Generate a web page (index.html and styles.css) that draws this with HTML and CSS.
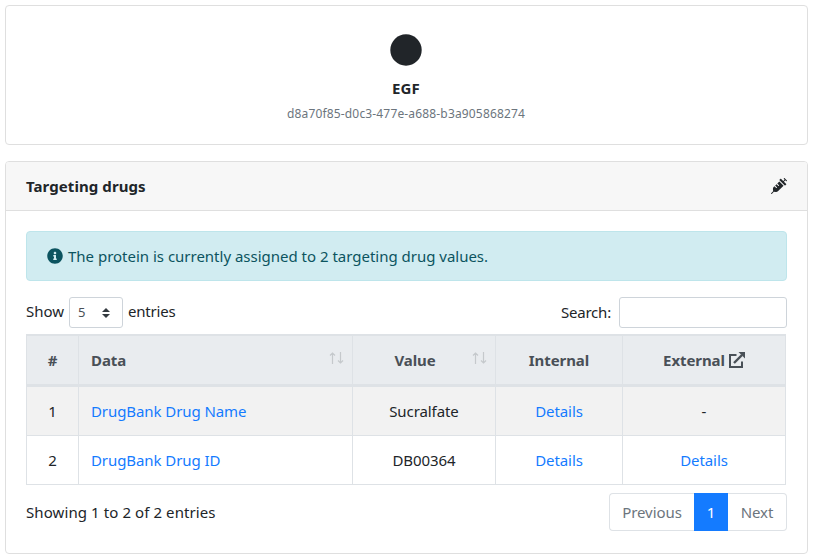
FILE: index.html
```html
<!DOCTYPE html>
<html lang="en">
<head>
<meta charset="utf-8">
<title>EGF</title>
<link rel="stylesheet" href="styles.css">
</head>
<body>
<section class="card summary">
  <svg class="dot" viewBox="0 0 32 32"><circle cx="16" cy="16" r="15.7" fill="currentColor"/></svg>
  <h1 class="name">EGF</h1>
  <small class="uuid">d8a70f85-d0c3-477e-a688-b3a905868274</small>
</section>
<section class="card drugs">
  <header class="card-header">
    <h2 class="title">Targeting drugs</h2>
    <svg class="syringe" viewBox="0 0 512 512"><path fill="currentColor" d="M201.5 174.800l55.700 55.800c3.100 3.100 3.100 8.200 0 11.300l-11.300 11.300c-3.100 3.100-8.200 3.100-11.300 0l-55.700-55.800-45.300 45.300 55.800 55.800c3.100 3.100 3.100 8.200 0 11.300l-11.300 11.300c-3.100 3.100-8.200 3.100-11.300 0L111 265.200l-26.400 26.400c-17.300 17.300-25.600 41.100-23 65.400l7.100 63.600L2.300 487c-3.100 3.100-3.100 8.200 0 11.300l11.300 11.300c3.100 3.100 8.200 3.100 11.300 0l66.300-66.300 63.600 7.100c23.900 2.600 47.900-5.400 65.400-23l181.900-181.900-135.700-135.700-64.900 65zm308.200-93.300L430.500 2.300c-3.100-3.100-8.200-3.100-11.300 0l-11.300 11.300c-3.100 3.100-3.100 8.200 0 11.300l28.300 28.300-45.300 45.300-56.600-56.600-17-17c-3.100-3.100-8.200-3.100-11.300 0l-33.900 33.900c-3.100 3.100-3.100 8.200 0 11.300l17 17L424.800 223l17 17c3.100 3.100 8.200 3.100 11.300 0l33.900-34c3.100-3.100 3.100-8.200 0-11.300l-73.500-73.500 45.300-45.300 28.300 28.300c3.100 3.100 8.200 3.100 11.300 0l11.300-11.300c3.100-3.200 3.100-8.200 0-11.400z"/></svg>
  </header>
  <div class="card-body">
    <div class="alert">
      <svg class="info" viewBox="0 0 512 512"><path fill="currentColor" d="M256 8C119 8 8 119.100 8 256c0 137 111 248 248 248s248-111 248-248C504 119.100 393 8 256 8zm0 110c23.200 0 42 18.800 42 42s-18.800 42-42 42-42-18.800-42-42 18.800-42 42-42zm56 254c0 6.600-5.400 12-12 12h-88c-6.600 0-12-5.400-12-12v-24c0-6.600 5.400-12 12-12h12v-64h-12c-6.600 0-12-5.400-12-12v-24c0-6.600 5.400-12 12-12h64c6.600 0 12 5.400 12 12v100h12c6.600 0 12 5.400 12 12v24z"/></svg>
      <span class="alert-text">The protein is currently assigned to 2 targeting drug values.</span>
    </div>
    <div class="controls">
      <div class="length">
        <span>Show</span>
        <div class="select"><span>5</span><svg class="caret" viewBox="0 0 4 5"><path fill="#343a40" d="M2 0L0 2h4zm0 5L0 3h4z"/></svg></div>
        <span>entries</span>
      </div>
      <label class="search"><span>Search:</span><input type="search"></label>
    </div>
    <table class="table">
      <colgroup><col class="c-num"><col class="c-data"><col class="c-value"><col class="c-int"><col class="c-ext"></colgroup>
      <thead>
        <tr>
          <th>#</th>
          <th class="left"><div class="sortable"><span>Data</span><svg class="sort" viewBox="0 0 15 12"><path d="M3.500 12V1M1 3.500L3.500 1L6 3.500M11.500 0v11M9 8.500L11.500 11L14 8.500"/></svg></div></th>
          <th class="value"><div class="sortable"><span class="grow">Value</span><svg class="sort" viewBox="0 0 15 12"><path d="M3.500 12V1M1 3.500L3.500 1L6 3.500M11.500 0v11M9 8.500L11.500 11L14 8.500"/></svg></div></th>
          <th>Internal</th>
          <th><div class="external"><span>External</span><svg class="ext" viewBox="0 0 16 16"><path fill="none" stroke="currentColor" stroke-width="2" d="M7.500 3H1v12h12V9.500"/><path fill="none" stroke="currentColor" stroke-width="2.400" d="M5 11L13 3"/><path fill="currentColor" d="M9.500 0H16v6.500z"/></svg></div></th>
        </tr>
      </thead>
      <tbody>
        <tr class="odd"><td>1</td><td class="left"><a>DrugBank Drug Name</a></td><td>Sucralfate</td><td><a>Details</a></td><td>-</td></tr>
        <tr><td>2</td><td class="left"><a>DrugBank Drug ID</a></td><td>DB00364</td><td><a>Details</a></td><td><a>Details</a></td></tr>
      </tbody>
    </table>
    <div class="footer">
      <span class="showing">Showing 1 to 2 of 2 entries</span>
      <nav class="pages"><span class="page prev">Previous</span><span class="page active">1</span><span class="page next">Next</span></nav>
    </div>
  </div>
</section>
</body>
</html>
```
FILE: styles.css
```css
* { box-sizing: border-box; }
body {
  margin: 0;
  padding: 5px;
  background: #fff;
  color: #212529;
  font: 15px/24px "Noto Sans", "Open Sans", sans-serif;
  letter-spacing: -0.08px;
}
svg { display: block; flex: none; }
.card { border: 1px solid #dfdfdf; border-radius: 4px; background: #fff; width: 803px; }
.summary {
  height: 140px;
  margin-bottom: 16px;
  padding: 28px 1px 0 0;
  display: flex;
  flex-direction: column;
  align-items: center;
}
.dot { width: 32px; height: 32px; }
.name { margin: 10px 0 0; font-size: 15px; line-height: 24px; font-weight: 700; letter-spacing: 0.1px; }
.uuid { margin-top: 2px; font-size: 12px; color: #6c757d; line-height: 24px; letter-spacing: 0.16px; }
.drugs { height: 393px; }
.card-header {
  height: 49px;
  padding: 0 20px;
  display: flex;
  align-items: center;
  justify-content: space-between;
  background: #f7f7f7;
  border-bottom: 1px solid #dfdfdf;
  border-radius: 3px 3px 0 0;
}
.title { margin: 0; font-size: 15px; line-height: 24px; font-weight: 700; letter-spacing: 0.08px; }
.syringe { width: 16px; height: 16px; }
.card-body { padding: 20px; }
.alert {
  height: 50px;
  padding: 0 20px;
  display: flex;
  align-items: center;
  gap: 5px;
  color: #0c5460;
  background: #d1ecf1;
  border: 1px solid #bee5eb;
  border-radius: 4px;
}
.alert-text { letter-spacing: -0.01px; }
.info { width: 16px; height: 16px; }
.controls { margin-top: 16px; height: 31px; display: flex; justify-content: space-between; }
.length { display: flex; gap: 5px; line-height: 29px; }
.length > span:last-child { letter-spacing: -0.2px; }
.select {
  width: 54px;
  height: 31px;
  padding: 0 12px 0 8px;
  display: flex;
  align-items: center;
  justify-content: space-between;
  border: 1px solid #ced4da;
  border-radius: 3px;
  color: #495057;
  font-size: 13px;
}
.length > span:first-child { width: 38px; letter-spacing: 0; }
.caret { width: 8px; height: 10px; }
.search { display: flex; gap: 8px; line-height: 31px; letter-spacing: -0.2px; }
.search input { width: 168px; height: 31px; border: 1px solid #ced4da; border-radius: 3px; background: #fff; padding: 4px 8px; }
.table {
  width: 760px;
  margin-top: 6px;
  table-layout: fixed;
  border-collapse: separate;
  border-spacing: 0;
  text-align: center;
}
.c-num { width: 53px; }
.c-data { width: 274px; }
.c-value { width: 143px; }
.c-int { width: 127px; }
.c-ext { width: 163px; }
th, td { padding: 0 12px; border: 0 solid #dee2e6; border-right-width: 1px; border-bottom-width: 1px; }
th:first-child, td:first-child { border-left-width: 1px; }
th { height: 53px; border-top-width: 2px; border-bottom-width: 3px; background: #e9ecef; color: #495057; font-weight: 700; }
td { height: 49px; }
.odd td { background: #f2f2f2; }
.left { text-align: left; }
.sortable { display: flex; align-items: center; justify-content: space-between; margin-right: -4px; }
.sort { width: 15px; height: 12px; fill: none; stroke: #c5c9cc; stroke-width: 1.2; margin-top: -4px; }
.value { padding-left: 5px; }
.grow { flex: 1; }
.external { display: flex; align-items: center; justify-content: center; gap: 4px; }
.ext { width: 16px; height: 16px; }
a { color: #147bff; }
.footer { margin-top: 8px; display: flex; justify-content: space-between; }
.showing { line-height: 39px; letter-spacing: 0.09px; }
.pages { display: flex; width: 178px; height: 38px; line-height: 38px; text-align: center; }
.page { border: 1px solid #dee2e6; color: #6c757d; line-height: 37px; }
.prev { width: 85px; border-right: 0; border-radius: 4px 0 0 4px; }
.active { width: 34px; background: #147bff; border-color: #147bff; color: #fff; }
.next { width: 59px; border-left: 0; border-radius: 0 4px 4px 0; }
```
